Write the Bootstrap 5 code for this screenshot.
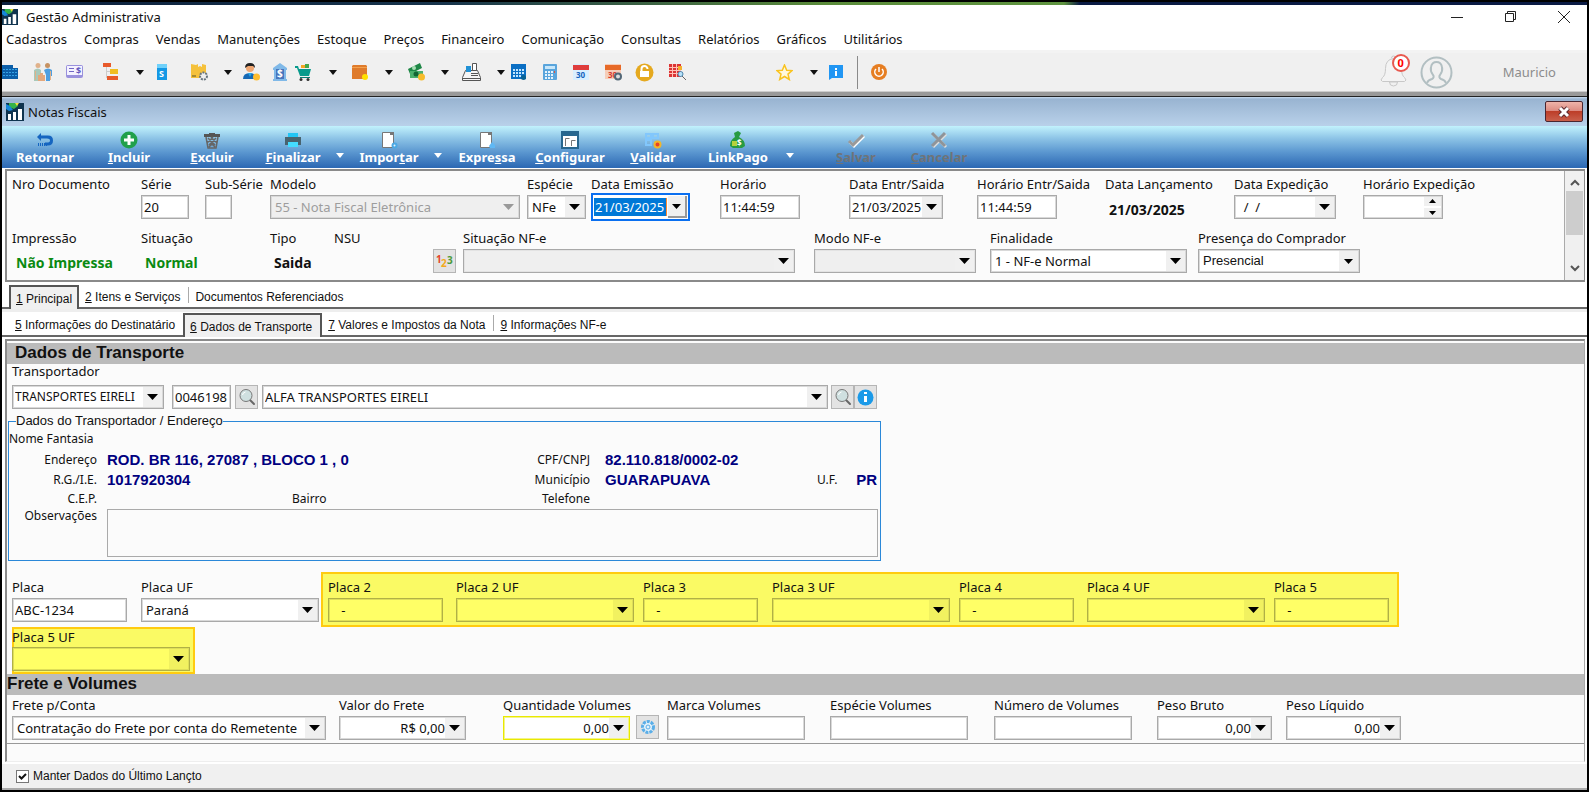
<!DOCTYPE html>
<html lang="pt-BR">
<head>
<meta charset="utf-8">
<meta name="viewport" content="width=device-width, initial-scale=1">
<title>Gestão Administrativa</title>
<link rel="stylesheet" href="https://cdn.jsdelivr.net/npm/bootstrap@5.3.0/dist/css/bootstrap.min.css">
<style>
:root{--line:#a9a9a9;--face:#f0f0f0;--panel:#fbfbfb}
body{font-family:"Noto Sans","Open Sans",sans-serif;font-size:13px;line-height:18px;color:#111;background:#fff;border:2px solid #000;min-height:100vh}
button{border:0;background:none;padding:0;color:inherit}
svg{display:block}
.accent{height:3px;background:linear-gradient(90deg,#0b1f3c 0,#17344c 28%,#5b8c3a 52%,#5f9440 67%,#0a1a44 68%,#0a1a44 100%)}
.titlebar{height:23px}
.menubar{height:22px;padding:0 4px;gap:17px}
.menubar a{color:#111;text-decoration:none}
.iconbar{height:42px;background:var(--face);border-top:3px solid #f3f3f3;border-bottom:1px solid #ccc}
.icongrid{display:grid;align-items:center;grid-template-columns:31px 33px 37px 33px 21px 34px 33px 19px 30px 22px 34px 23px 33px 23px 33px 21px 35px 14px 32px 30px 32px 30px 34px 107px 34px 19px 28px 14px 20px}
.vsep{width:1px;height:33px;background:#8a8a8a}
.caret{width:0;height:0;border:4px solid transparent;border-top:5px solid #111;border-bottom:0}
.caret.lt{border-top-color:#fff}
.bellcount{top:-1px;left:13px;width:18px;height:18px;border:2px solid #e8594f;border-radius:50%;background:#fff;color:#f00;font-size:11px;line-height:14px;font-weight:700;text-align:center}
.user{color:#8c8c8c;padding:0 31px 0 50px}
.divider{height:5px;background:#999;border-bottom:1px solid #222}
.childbar{height:29px;background:linear-gradient(#c9dcf0 0,#99b4d1 7%,#b9d1ea 100%)}
.closebtn{width:38px;height:21px;border:1px solid #4a2630;border-radius:2px;background:linear-gradient(#eeb4aa 0,#dc8a80 48%,#bd3e28 50%,#c9604c 100%)}
.actions{display:grid;height:42px;grid-template-columns:86px 82px 84px 78px 16px 82px 16px 82px 84px 82px 88px 31px 86px 80px;background:linear-gradient(#c2f2fd 0,#8cc3e6 30%,#5b97d0 62%,#2f6bb5 97%);color:#fff}
.actions button{display:flex;flex-direction:column;align-items:center;padding-top:5px;line-height:17px;font-weight:700}
.actions button.drop{padding:27px 0 0 4px;align-items:start}
.actions button:disabled{color:#6f7377}
.header{background:var(--panel);border:2px solid #8a8a8a;border-width:2px 1px 2px 2px;margin:1px 2px 0 3px}
.headform{padding:4px 0 7px 5px}
.fgrid{display:grid}
.fgrid label,.lab{display:block;line-height:18px;white-space:nowrap}
.g1{grid-template-columns:129px 64px 65px 257px 64px 129px 129px 128px 128px 129px 129px 129px;height:54px}
.g2{grid-template-columns:129px 129px 64px 99px 30px 351px 176px 208px 162px}
.g3{display:grid;grid-template-columns:128px 187px 129px 187px 128px 187px 115px}
.g4{grid-template-columns:327px 164px 133px 31px 163px 164px 163px 129px 129px}
.ctl{display:block;height:24px;margin-top:2px;border:1px solid var(--line);outline:1px solid #d9d9d9;outline-offset:-2px;background:#fff;padding:0 2px;color:#111;font:inherit;line-height:20px;border-radius:0;appearance:none}
select.ctl{padding-left:4px}
.combo,select.combo{background:#fff url("data:image/svg+xml,%3Csvg xmlns='http://www.w3.org/2000/svg' width='19' height='20'%3E%3Cpath fill='%23f0f0f0' d='M0 0h19v20H0z'/%3E%3Cpath d='M4 7h11l-5.500 6z'/%3E%3C/svg%3E") right 1px center no-repeat;padding-right:20px}
.combo.gray{background-color:#efefef;outline-color:#e3e3e3}
.combo:disabled{opacity:1;color:#9d9d9d;background:#efefef url("data:image/svg+xml,%3Csvg xmlns='http://www.w3.org/2000/svg' width='19' height='20'%3E%3Cpath fill='%23999' d='M4 7h11l-5.500 6z'/%3E%3C/svg%3E") right 1px center no-repeat}
select.small-arrow{background-image:url("data:image/svg+xml,%3Csvg xmlns='http://www.w3.org/2000/svg' width='19' height='20'%3E%3Cpath fill='%23f0f0f0' d='M0 0h19v20H0z'/%3E%3Cpath d='M5 8h9l-4.500 5z'/%3E%3C/svg%3E");font-family:"Liberation Sans",Arial,sans-serif}
.num{text-align:right}
.tight{font-size:12px}
select.tight,.carrier.ctl{padding-left:2px}
.w27{width:27px}.w48{width:48px}.w59{width:59px}.w80{width:80px}.w94{width:94px}.w99{width:99px}.w102{width:102px}.w115{width:115px}.w127{width:127px}.w138{width:138px}.w152{width:152px}.w162{width:162px}.w178{width:178px}.w197{width:197px}.w250{width:250px}.w314{width:314px}.w332{width:332px}
.active-date{border:2px solid #0a6ff0;outline:0;height:28px;margin-top:0;color:#fff;background:url("data:image/svg+xml,%3Csvg xmlns='http://www.w3.org/2000/svg' width='19' height='22'%3E%3Cpath fill='%23999' d='M0 0h19v22H0z'/%3E%3Cpath fill='%23f0f0f0' d='M0 0h17v20H0z'/%3E%3Cpath d='M4 8h9l-4.500 5z'/%3E%3C/svg%3E") right 1px center no-repeat,linear-gradient(#ff8a30,#ff8a30) 73px 3px/1px 18px no-repeat,linear-gradient(#0078d7,#0078d7) 1px 3px/72px 18px no-repeat,#fff}
.spin{background:#fff url("data:image/svg+xml,%3Csvg xmlns='http://www.w3.org/2000/svg' width='17' height='20'%3E%3Cpath fill='%23f0f0f0' d='M0 0h17v9H0zM0 11h17v9H0z'/%3E%3Cpath d='M5 6h7l-3.500-4zM5 14h7l-3.500 4z'/%3E%3C/svg%3E") right 1px center no-repeat}
.tile{width:23px;height:24px;margin-top:2px;border:1px solid #b5b5b5;background:#e3e3e3;display:flex;align-items:center;justify-content:center}
.undertag{padding-top:18px}
.stat{display:block;font-weight:700;font-size:14px;line-height:20px;padding:6px 0 0 4px;white-space:nowrap}
.stat.low{padding-top:7px}
.green{color:#0a8a12}
.vscroll{width:20px;background:var(--face);border-left:1px solid #aaa}
.thumb{width:17px;height:44px;background:#cdcdcd}
.tabs{font-family:"Liberation Sans",Arial,sans-serif;background:#fff;border-bottom:2px solid #666;padding:2px 0 0 7px;font-size:12px}
.tabs.first{margin-top:1px}
.tabs.second{border-top:3px solid #eee;margin-bottom:2px;padding-top:1px}
.tabs button{height:20px;padding:0 8px 0 6px;line-height:20px;white-space:nowrap;color:#111}
.tabs button.on{height:24px;margin-bottom:-2px;padding:0 5px;border:2px solid #555;border-bottom:0;background:var(--face);line-height:24px}
.tabs.second button.on{padding-right:8px}
.tabs .bar{width:1px;height:16px;background:#aaa}
.main{background:var(--panel);border:2px solid #8a8a8a;border-right:1px solid #aaa;border-bottom:1px solid #eee;margin:0 2px 0 3px;flex:1 0 auto}
.section{font-family:"Liberation Sans",Arial,sans-serif;font-weight:700;font-size:17px;line-height:20px;height:21px;background:#bbb;margin:0}
.section.top{margin-top:2px}
.carrierbox{padding:0 0 0 5px}
.carrierbox .lab{line-height:15px}
.carrier{width:566px;margin-right:3px}
.addr{width:873px;border:1px solid #2b88d8;border-radius:0;height:147px;margin:5px 0 0 1px;padding:0;font-size:12px}
.addr legend{font:13px/14px "Liberation Sans",Arial,sans-serif;float:none;width:auto;margin:0 0 0 7px;padding:0}
.agrid{display:grid;grid-template-columns:88px 10px 185px 298px 15px 212px 60px;grid-template-rows:21px 21px 20px 17px 50px;align-items:center}
.agrid b{font:700 15px/18px "Liberation Sans",Arial,sans-serif;color:#000080;white-space:nowrap}
.obs{grid-column:3/8;width:771px;height:48px;margin:0;border:1px solid #aaa;background:var(--panel);resize:none;align-self:end}
.hl{background:#fafa64;box-shadow:inset 0 0 0 2px #ffcb10}
.hl .ctl{background-color:#ffff66;border-color:#b0b046;outline-color:#dede58}
.hl .combo{background-image:url("data:image/svg+xml,%3Csvg xmlns='http://www.w3.org/2000/svg' width='19' height='20'%3E%3Cpath fill='%23f1f160' d='M0 0h19v20H0z'/%3E%3Cpath d='M4 7h11l-5.500 6z'/%3E%3C/svg%3E")}
.plates{padding:11px 0 0 5px}
.pair{padding-top:6px}
.p1{width:129px}.p2{width:180px}
.hl-a{padding:6px 10px 5px 7px}
.hl-b{padding:2px 0 3px;width:183px}
.hl-b .lab,.freight label{line-height:17px}
.hl-b .ctl{margin-top:1px}
.freight{padding:2px 0 3px 5px;border-bottom:1px solid #999}
.must{border-color:#e9e900;outline-color:#f3f38a}
.footbar{height:28px;background:var(--face);border-top:2px solid #fff;border-bottom:2px solid #aaa;padding:0 0 0 14px;font-family:"Liberation Sans",Arial,sans-serif;font-size:12px}
.footbar input{width:13px;height:13px;margin:0;border:1px solid #777;border-radius:0;appearance:none;background:#fff url("data:image/svg+xml,%3Csvg xmlns='http://www.w3.org/2000/svg' width='11' height='11'%3E%3Cpath d='M2 5l2.500 2.500L9 3' fill='none' stroke='%23111' stroke-width='2'/%3E%3C/svg%3E") center no-repeat}
</style>
</head>
<body class="d-flex flex-column">
<svg width="0" height="0" class="position-absolute" aria-hidden="true">
  <defs>
    <symbol id="logo" viewBox="0 0 18 18"><path fill="#10344f" d="M0 0h18v18H0z"/><path fill="#35b34a" d="M3 0h7l2 3-4 3-5-2z"/><path fill="#1687d9" d="M0 1l4 2 3 4-4 1-3-2z"/><path fill="#f4e13b" d="M9 0h4l-2 3z"/><path fill="#fff" d="M2 11h3v6H2zM7 9h3v8H7zM12 6h4v11h-4z"/></symbol>
    <symbol id="lens" viewBox="0 0 18 18"><path d="M12 12l4 4" stroke="#666" stroke-width="2" stroke-linecap="round"/><circle cx="8" cy="7.500" r="6" fill="#cfe0e0" stroke="#777"/><path d="M4.500 7a3.500 3.500 0 0 1 3-3" stroke="#fff" fill="none"/></symbol>
    <symbol id="doc" viewBox="0 0 18 18"><path fill="#fff" stroke="#777" d="M2.500 1.500h8l3 3V16.500h-11z"/><path fill="#777" d="M10 1h4v4h-1V4h-3z"/></symbol>
  </defs>
</svg>
<div class="accent"></div>

<header class="titlebar d-flex align-items-center">
  <svg width="16" height="18"><use href="#logo"/></svg>
  <span class="ps-1 ms-1 me-auto">Gestão Administrativa</span>
  <button aria-label="Minimizar" class="me-4 pe-3"><svg width="14" height="12"><path d="M1 6.500h12" stroke="#222"/></svg></button>
  <button aria-label="Restaurar" class="me-4 pe-3"><svg width="13" height="13"><path d="M1.500 3.500h8v8h-8zM3.500 3.500v-2h8v8h-2" fill="none" stroke="#222"/></svg></button>
  <button aria-label="Fechar" class="me-3"><svg width="14" height="14"><path d="M1 1l12 12M13 1L1 13" stroke="#222"/></svg></button>
</header>

<nav class="menubar d-flex align-items-center">
  <a href="#">Cadastros</a><a href="#">Compras</a><a href="#">Vendas</a><a href="#">Manutenções</a><a href="#">Estoque</a><a href="#">Preços</a><a href="#">Financeiro</a><a href="#">Comunicação</a><a href="#">Consultas</a><a href="#">Relatórios</a><a href="#">Gráficos</a><a href="#">Utilitários</a>
</nav>

<div class="iconbar d-flex align-items-center">
  <div class="icongrid">
    <button aria-label="Empresas"><svg width="17" height="16"><path fill="#0b5ea8" d="M0 1h11v3h5v11H0z"/><path stroke="#35a3e6" stroke-dasharray="2 1" d="M1 5.500h14M1 8.500h14M1 11.500h14"/></svg></button>
    <button aria-label="Parceiros"><svg width="20" height="20"><circle cx="5" cy="3.500" r="2.500" fill="#e0b18a"/><circle cx="14.500" cy="3.500" r="2.500" fill="#c79262"/><path fill="#a9c9ba" d="M1 8q4-3 7 0v11H1z"/><path fill="#4f9fe0" d="M11 8q4-3 8 0v6h-2v5h-4v-6z"/><path fill="#e5a87c" d="M5 13h7v6H5zM7 11h3v2H7z"/><path stroke="#e0b18a" d="M2.500 9v9M17.500 9v9"/></svg></button>
    <button aria-label="Cadastro de contas"><svg width="18" height="18"><rect y="2" width="17" height="13" rx="2" fill="#9a91dd"/><path fill="#f4f2ff" d="M1 3h15v9H1z"/><path stroke="#7167c4" d="M3 5.500h5M3 8.500h5"/><text x="10" y="11" font-size="9" font-weight="700" fill="#6259bd">$</text></svg></button>
    <button aria-label="Estrutura"><svg width="17" height="18"><path fill="#e85a2b" d="M0 0h8v4H0zM4 13h11v4H4z"/><path fill="#f0bd23" d="M7 6h8v5H7z"/><path d="M3.500 4v11M3.500 8.500H7" stroke="#ccc" fill="none"/></svg></button>
    <button aria-label="Mais estruturas"><span class="caret d-block"></span></button>
    <button aria-label="Serviços"><svg width="11" height="18"><path fill="#1598e5" d="M0 1h10v16H0z"/><path fill="#70d1fa" d="M0 1h10v4H0z"/><text x="2" y="14" font-size="9" font-weight="700" fill="#fff">S</text></svg></button>
    <button aria-label="Produtos"><svg width="18" height="18"><path fill="#f5c13b" d="M0 1l5 1 2-1v3l2-1 2 1V1l4 1v13H0z"/><path fill="#a88b31" d="M1 12h4v2H1z"/><circle cx="12.500" cy="13" r="3.500" fill="#eee" stroke="#66737d" stroke-width="2" stroke-dasharray="2 1"/></svg></button>
    <button aria-label="Mais produtos"><span class="caret d-block"></span></button>
    <button aria-label="Clientes"><svg width="18" height="18"><circle cx="7" cy="5" r="4" fill="#f0a773"/><path fill="#222" d="M2 5q0-5 5-5t5 5l-2-2H5z"/><path fill="#1769b5" d="M0 16q0-6 7-6 4 0 5 3v3z"/><path fill="#29a8e8" d="M5 10h4l-2 4z"/><circle cx="13.500" cy="14" r="3.500" fill="#ffbd2e"/></svg></button>
    <button aria-label="Banco"><svg width="15" height="19"><path fill="#80b9e8" d="M0 5l7-5 7 5v2H0zM1 7h3v9H1zM10 7h3v9h-3zM0 16h14v2H0z"/><path fill="#4976bd" d="M3 6h8v10H3z"/><text x="4" y="14" font-size="10" font-weight="700" fill="#fff">$</text></svg></button>
    <button aria-label="Compras"><svg width="18" height="17"><path fill="#079a8c" d="M0 2h3l1 3h12l-2 7H5L2 4H0z"/><path fill="#f5a623" d="M6 1h4v3H6z"/><path fill="#46a84b" d="M10 0h4v4h-4z"/><path stroke="#087c75" d="M5 13.500h10"/><circle cx="6" cy="15.500" r="1.500" fill="#333"/><circle cx="13" cy="15.500" r="1.500" fill="#333"/></svg></button>
    <button aria-label="Mais compras"><span class="caret d-block"></span></button>
    <button aria-label="Estoque"><svg width="17" height="17"><path fill="#df7b2c" d="M0 2l1-1h13l1 1v13H0z"/><path fill="#f4a14d" d="M0 3h15v1H0z"/><circle cx="13" cy="13" r="3" fill="#ffe000"/></svg></button>
    <button aria-label="Mais estoque"><span class="caret d-block"></span></button>
    <button aria-label="Financeiro"><svg width="18" height="18"><path fill="#1e8746" d="M0 6l12-6 2 5-12 6z"/><path fill="#4cb06b" d="M2 8h13v7H2z"/><circle cx="8" cy="11" r="2.500" fill="#146633"/><circle cx="6" cy="5" r="2" fill="#a8deb5"/><circle cx="13.500" cy="14" r="3.500" fill="#f7bc2c"/></svg></button>
    <button aria-label="Mais financeiro"><span class="caret d-block"></span></button>
    <button aria-label="Caixa"><svg width="20" height="19"><path fill="#f5f5f5" stroke="#555" d="M3.500 7.500h12l3 7v3H.5v-3z"/><path fill="#2191d5" d="M4 3h5v6H4z"/><path fill="#fff" stroke="#555" d="M10.500.5h4v7h-4z"/><path stroke="#555" d="M9 10.500h7M9 12.500h7M1 15.500h17"/></svg></button>
    <button aria-label="Mais caixa"><span class="caret d-block"></span></button>
    <button aria-label="Agenda"><svg width="17" height="17"><path fill="#0b6fc4" d="M0 0h15v15H0z"/><path stroke="#c2e5ff" stroke-width="2" stroke-dasharray="2 1" d="M2 6h11M2 9h11M2 12h8"/><circle cx="12.500" cy="13.500" r="2.500" fill="#096294"/></svg></button>
    <button aria-label="Calculadora"><svg width="15" height="17"><rect width="14" height="16" rx="1" fill="#5aa5dc"/><path fill="#c8e7fa" d="M2 2h10v3H2z"/><path stroke="#e7f4fc" stroke-width="2" stroke-dasharray="2 1" d="M2 8h9M2 11h9M2 14h9"/><path fill="#df5340" d="M11 7h1v2h-1z"/></svg></button>
    <button aria-label="Calendário"><svg width="17" height="17"><path fill="#d9efff" d="M0 0h16v16H0z"/><path fill="#df3d3d" d="M0 1h16v5H0z"/><text x="3" y="14" font-size="8" font-weight="700" fill="#1565c0">30</text></svg></button>
    <button aria-label="Configurar calendário"><svg width="18" height="17"><path fill="#f6cdb9" d="M0 0h16v15H0z"/><path fill="#e76a28" d="M0 1h16v5H0z"/><text x="3" y="14" font-size="8" font-weight="700" fill="#d53b2e">30</text><circle cx="13" cy="12.500" r="3" fill="#ddd" stroke="#526776" stroke-width="2"/></svg></button>
    <button aria-label="Bloqueio"><svg width="19" height="19"><circle cx="9.500" cy="9.500" r="9" fill="#e5a91f"/><path fill="#fff" d="M5 8h9v6H5z"/><path d="M6.500 8V6a3 3 0 0 1 6 0" stroke="#fff" stroke-width="2" fill="none"/></svg></button>
    <button aria-label="Pesquisar relatório"><svg width="18" height="18"><path fill="#dc3434" d="M0 1h12v13H0z"/><path stroke="#ffc2b8" d="M0 4.500h12M0 7.500h12M0 10.500h12M3.500 1v13M7.500 1v13"/><path fill="#f4b02f" d="M9 3h4v4H9z"/><circle cx="11.500" cy="11" r="2.500" fill="#b9e3fa" stroke="#4b85ad"/><path stroke="#666" d="M13 13l4 4"/></svg></button>
    <button aria-label="Favoritos"><svg width="17" height="17"><path d="M8.500 1l2.200 5.200 5.300.4-4 3.500 1.300 5.400-4.800-3-4.800 3 1.300-5.400-4-3.500 5.300-.4z" fill="#fff8dd" stroke="#f9c31f" stroke-width="1.500"/></svg></button>
    <button aria-label="Mais favoritos"><span class="caret d-block"></span></button>
    <button aria-label="Informações"><svg width="15" height="15"><path fill="#2196f3" d="M0 0h14v13H3l-3 2z"/><path fill="#fff" d="M6 3h2v2H6zM6 6h2v5H6z"/></svg></button>
    <span class="vsep"></span>
    <button aria-label="Sair"><svg width="16" height="16"><circle cx="8" cy="8" r="8" fill="#e67e22"/><path d="M8 3v5M5 5a4.200 4.200 0 1 0 6 0" fill="none" stroke="#fff" stroke-width="1.500"/></svg></button>
  </div>
  <button class="position-relative ms-auto me-2 pe-1" aria-label="Notificações"><svg width="29" height="35"><path d="M3.500 26.500q-3-1 0-4 3-2 3-9 0-9 8-10 8 1 8 10 0 7 3 9 3 3 0 4z" fill="#f3f3f3" stroke="#c8c8c8"/><path d="M12.500 3q0-2 2-2t2 2M10.500 27a4 4 0 0 0 8 0z" fill="none" stroke="#c8c8c8"/></svg><span class="bellcount position-absolute">0</span></button>
  <button aria-label="Perfil"><svg width="33" height="33"><circle cx="16.500" cy="16.500" r="15" fill="none" stroke="#b2bfc2" stroke-width="2"/><path d="M7 27q1-3 5-4c2-1 2-3 1-4q-3-4-2-8 1-5 5.500-5t5.500 5q1 4-2 8c-1 1-1 3 1 4q4 1 5 4" fill="none" stroke="#b2bfc2" stroke-width="2"/></svg></button>
  <span class="user">Mauricio</span>
</div>
<div class="divider"></div>

<div class="childbar d-flex align-items-center ps-1">
  <svg width="18" height="18"><use href="#logo"/></svg><span class="ms-1 me-auto">Notas Fiscais</span>
  <button class="closebtn d-flex align-items-center justify-content-center me-1" aria-label="Fechar notas"><svg width="14" height="12"><path d="M3 2l8 8M11 2l-8 8" stroke="#5c2a30" stroke-width="5"/><path d="M3 2l8 8M11 2l-8 8" stroke="#fff" stroke-width="3"/></svg></button>
</div>

<div class="actions">
  <button><svg width="18" height="18"><path d="M5 2L1 6l4 4V7.500h6q3 0 3 2t-3 2H9v3h3q5 0 5-5t-5-5H5z" fill="#1565c0"/><path stroke="#1565c0" stroke-dasharray="1 1" stroke-width="3" d="M2 13.500h9"/></svg>Retornar</button>
  <button><svg width="18" height="18"><circle cx="9" cy="9" r="8.500" fill="#21a04b"/><path stroke="#fff" stroke-width="3" d="M9 4v10M4 9h10"/></svg><span><u>I</u>ncluir</span></button>
  <button><svg width="18" height="18"><path fill="#555" d="M1 3h16v3H1zM6 2h6v1H6z"/><path d="M3 6l2 11h8l2-11M5 7l7 7M8 6l6 6M13 7l-7 7M10 6l-6 6M6 16l3-3 3 3" fill="none" stroke="#666" stroke-width="1.500"/></svg><span><u>E</u>xcluir</span></button>
  <button><svg width="18" height="18"><path fill="#22c5f5" d="M4 2h10v4H4z"/><path fill="#48636f" d="M1 6h16v8H1z"/><path fill="#44dcff" d="M4 11h10v5H4z"/></svg><span><u>F</u>inalizar</span></button>
  <button class="drop" aria-label="Opções de finalizar"><span class="caret lt"></span></button>
  <button><svg width="18" height="18"><use href="#doc"/><circle cx="14.500" cy="14.500" r="2" fill="#dff1fb" stroke="#4ca9e4" stroke-width="2"/></svg><span>Impor<u>t</u>ar</span></button>
  <button class="drop" aria-label="Opções de importar"><span class="caret lt"></span></button>
  <button><svg width="18" height="18"><use href="#doc"/><path d="M11 15l3-4 3 3v3h-5z" fill="#60b8f4"/></svg><span>Expre<u>s</u>sa</span></button>
  <button><svg width="18" height="18"><path fill="#fff" stroke="#27678f" stroke-width="2" d="M1 1h16v16H1z"/><path fill="#27678f" d="M1 1h16v4H1z"/><path d="M4.500 15V7.500h4M10.500 15V9.500h4" fill="none" stroke="#777"/></svg><span><u>C</u>onfigurar</span></button>
  <button><svg width="18" height="18"><path d="M2 3h5v4H2zM9 3h5v4H9zM2 9h5v5H2z" fill="none" stroke="#82c7fc" stroke-width="2"/><circle cx="13.500" cy="13.500" r="3" fill="#e74127" stroke="#f2b62a" stroke-width="2"/></svg><span><u>V</u>alidar</span></button>
  <button><svg width="18" height="18"><path fill="#279b42" d="M5 2l4-2 3 2-2 4q6 3 6 9l-3 2H4l-3-2q0-6 5-9z"/><path fill="#b7d23d" d="M3 10h5v5H3z"/><text x="8" y="15" font-size="8" font-weight="700" fill="#fff">$</text></svg><span>LinkPago</span></button>
  <button class="drop" aria-label="Opções de LinkPago"><span class="caret lt"></span></button>
  <button disabled><svg width="18" height="18"><path d="M3 11l4 4L17 5" fill="none" stroke="#fff" stroke-width="3"/><path d="M2 10l4 4L16 4" fill="none" stroke="#999" stroke-width="3"/></svg><span><u>S</u>alvar</span></button>
  <button disabled><svg width="18" height="18"><path d="M3 3l13 13M16 3L3 16" stroke="#ddd" stroke-width="3"/><path d="M2 2l13 13M15 2L2 15" stroke="#8f9499" stroke-width="3"/></svg><span><u>C</u>ancelar</span></button>
</div>

<section class="header d-flex">
  <div class="headform flex-grow-1">
    <div class="fgrid g1">
      <div><span class="lab">Nro Documento</span></div>
      <div><label for="serie">Série</label><input id="serie" class="ctl w48" value="20"></div>
      <div><label for="sub">Sub-Série</label><input id="sub" class="ctl w27"></div>
      <div><label for="modelo">Modelo</label><select id="modelo" class="ctl combo w250" disabled><option>55 - Nota Fiscal Eletrônica</option></select></div>
      <div><label for="especie">Espécie</label><select id="especie" class="ctl combo w59"><option>NFe</option></select></div>
      <div><label for="emissao">Data Emissão</label><input id="emissao" class="ctl active-date w99" value="21/03/2025"></div>
      <div><label for="hora">Horário</label><input id="hora" class="ctl w80" value="11:44:59"></div>
      <div><label for="entr">Data Entr/Saida</label><input id="entr" class="ctl combo w94" value="21/03/2025"></div>
      <div><label for="horaentr">Horário Entr/Saida</label><input id="horaentr" class="ctl w80" value="11:44:59"></div>
      <div><span class="lab">Data Lançamento</span><span class="stat low">21/03/2025</span></div>
      <div><label for="exped">Data Expedição</label><input id="exped" class="ctl combo w102" value="  /  /"></div>
      <div><label for="horaexp">Horário Expedição</label><input id="horaexp" class="ctl spin w80"></div>
    </div>
    <div class="fgrid g2">
      <div><span class="lab">Impressão</span><span class="stat green">Não Impressa</span></div>
      <div><span class="lab">Situação</span><span class="stat green">Normal</span></div>
      <div><span class="lab">Tipo</span><span class="stat">Saida</span></div>
      <div><span class="lab">NSU</span></div>
      <div class="undertag"><button class="tile" aria-label="Numerar"><svg width="21" height="20"><text x="2" y="12" font-size="10" font-weight="700" fill="#e5432a">1</text><text x="7" y="16" font-size="10" font-weight="700" fill="#f3a81c">2</text><text x="13" y="13" font-size="10" font-weight="700" fill="#4c9a3a">3</text></svg></button></div>
      <div><label for="sitnfe">Situação NF-e</label><select id="sitnfe" class="ctl combo gray w332"><option></option></select></div>
      <div><label for="modo">Modo NF-e</label><select id="modo" class="ctl combo gray w162"><option></option></select></div>
      <div><label for="final">Finalidade</label><select id="final" class="ctl combo w197"><option>1 - NF-e Normal</option></select></div>
      <div><label for="presenca">Presença do Comprador</label><select id="presenca" class="ctl combo small-arrow w162"><option>Presencial</option></select></div>
    </div>
  </div>
  <div class="vscroll d-flex flex-column align-items-center py-1">
    <svg width="12" height="16"><path d="M2 10l4-4 4 4" fill="none" stroke="#555" stroke-width="2"/></svg>
    <div class="thumb"></div>
    <svg class="mt-auto" width="12" height="16"><path d="M2 6l4 4 4-4" fill="none" stroke="#555" stroke-width="2"/></svg>
  </div>
</section>

<div class="tabs first d-flex align-items-end">
  <button class="on"><u>1</u> Principal</button><button><u>2</u> Itens e Serviços</button><span class="bar mb-1"></span><button>Documentos Referenciados</button>
</div>
<div class="tabs second d-flex align-items-end">
  <button><u>5</u> Informações do Destinatário</button><button class="on"><u>6</u> Dados de Transporte</button><button><u>7</u> Valores e Impostos da Nota</button><span class="bar mb-1"></span><button><u>9</u> Informações NF-e</button>
</div>

<main class="main">
  <h2 class="section top ps-2">Dados de Transporte</h2>
  <div class="carrierbox">
    <label for="transp" class="lab">Transportador</label>
    <div class="d-flex mt-1">
      <select id="transp" class="ctl combo tight w152 me-2"><option>TRANSPORTES EIRELI</option></select>
      <input aria-label="Código" class="ctl w59 me-1" value="0046198">
      <button class="tile me-1" aria-label="Buscar código"><svg width="18" height="18"><use href="#lens"/></svg></button>
      <select aria-label="Nome do transportador" class="ctl combo carrier"><option>ALFA TRANSPORTES EIRELI</option></select>
      <button class="tile" aria-label="Buscar transportador"><svg width="18" height="18"><use href="#lens"/></svg></button>
      <button class="tile" aria-label="Informações do transportador"><svg width="17" height="17"><circle cx="8.500" cy="8.500" r="8" fill="#1b9ae8"/><path fill="#fff" d="M7 3h3v2H7zM7 7h3v6H7z"/></svg></button>
    </div>
  </div>
  <fieldset class="addr">
    <legend>Dados do Transportador / Endereço</legend>
    <div class="agrid">
      <span>Nome Fantasia</span><span></span><span></span><span></span><span></span><span></span><span></span>
      <span class="text-end">Endereço</span><span></span><b>ROD. BR 116, 27087 , BLOCO 1 , 0</b><span class="text-end">CPF/CNPJ</span><span></span><b>82.110.818/0002-02</b><span></span>
      <span class="text-end">R.G./I.E.</span><span></span><b>1017920304</b><span class="text-end">Município</span><span></span><b>GUARAPUAVA</b><span class="d-flex justify-content-between align-items-center"><span>U.F.</span><b>PR</b></span>
      <span class="text-end">C.E.P.</span><span></span><span></span><span class="d-flex justify-content-between"><span>Bairro</span><span>Telefone</span></span><span></span><span></span><span></span>
      <label for="obs" class="text-end align-self-start">Observações</label><span></span><textarea id="obs" class="obs"></textarea>
    </div>
  </fieldset>
  <div class="plates">
    <div class="d-flex">
      <div class="d-flex pair">
        <div class="p1"><label class="lab" for="p1">Placa</label><input id="p1" class="ctl w115" value="ABC-1234"></div>
        <div class="p2"><label class="lab" for="p1u">Placa UF</label><select id="p1u" class="ctl combo w178"><option>Paraná</option></select></div>
      </div>
      <div class="hl hl-a g3">
        <div><label class="lab" for="p2">Placa 2</label><input id="p2" class="ctl w115" value="   -"></div>
        <div><label class="lab" for="p2u">Placa 2 UF</label><select id="p2u" class="ctl combo w178"><option></option></select></div>
        <div><label class="lab" for="p3">Placa 3</label><input id="p3" class="ctl w115" value="   -"></div>
        <div><label class="lab" for="p3u">Placa 3 UF</label><select id="p3u" class="ctl combo w178"><option></option></select></div>
        <div><label class="lab" for="p4">Placa 4</label><input id="p4" class="ctl w115" value="   -"></div>
        <div><label class="lab" for="p4u">Placa 4 UF</label><select id="p4u" class="ctl combo w178"><option></option></select></div>
        <div><label class="lab" for="p5">Placa 5</label><input id="p5" class="ctl w115" value="   -"></div>
      </div>
    </div>
    <div class="hl hl-b"><label class="lab" for="p5u">Placa 5 UF</label><select id="p5u" class="ctl combo w178"><option></option></select></div>
  </div>
  <h2 class="section">Frete e Volumes</h2>
  <div class="freight fgrid g4">
    <div><label for="fconta">Frete p/Conta</label><select id="fconta" class="ctl combo w314"><option>Contratação do Frete por conta do Remetente</option></select></div>
    <div><label for="fvalor">Valor do Frete</label><input id="fvalor" class="ctl combo num w127" value="R$ 0,00"></div>
    <div><label for="qvol">Quantidade Volumes</label><input id="qvol" class="ctl combo num must w127" value="0,00"></div>
    <div class="pt-3"><button class="tile" aria-label="Configurar volumes"><svg width="16" height="16"><circle cx="8" cy="8" r="5.500" fill="#e3f2fb" stroke="#5aaee8" stroke-width="3" stroke-dasharray="3 1"/><circle cx="8" cy="8" r="2" fill="#e3f2fb" stroke="#5aaee8"/></svg></button></div>
    <div><label for="mvol">Marca Volumes</label><input id="mvol" class="ctl w138"></div>
    <div><label for="evol">Espécie Volumes</label><input id="evol" class="ctl w138"></div>
    <div><label for="nvol">Número de Volumes</label><input id="nvol" class="ctl w138"></div>
    <div><label for="pb">Peso Bruto</label><input id="pb" class="ctl combo num w115" value="0,00"></div>
    <div><label for="pl">Peso Líquido</label><input id="pl" class="ctl combo num w115" value="0,00"></div>
  </div>
</main>
<footer class="footbar d-flex align-items-center">
  <input type="checkbox" id="manter" checked><label for="manter" class="ms-1">Manter Dados do Último Lançto</label>
</footer>
<script src="https://cdn.jsdelivr.net/npm/bootstrap@5.3.0/dist/js/bootstrap.bundle.min.js"></script>
</body>
</html>
